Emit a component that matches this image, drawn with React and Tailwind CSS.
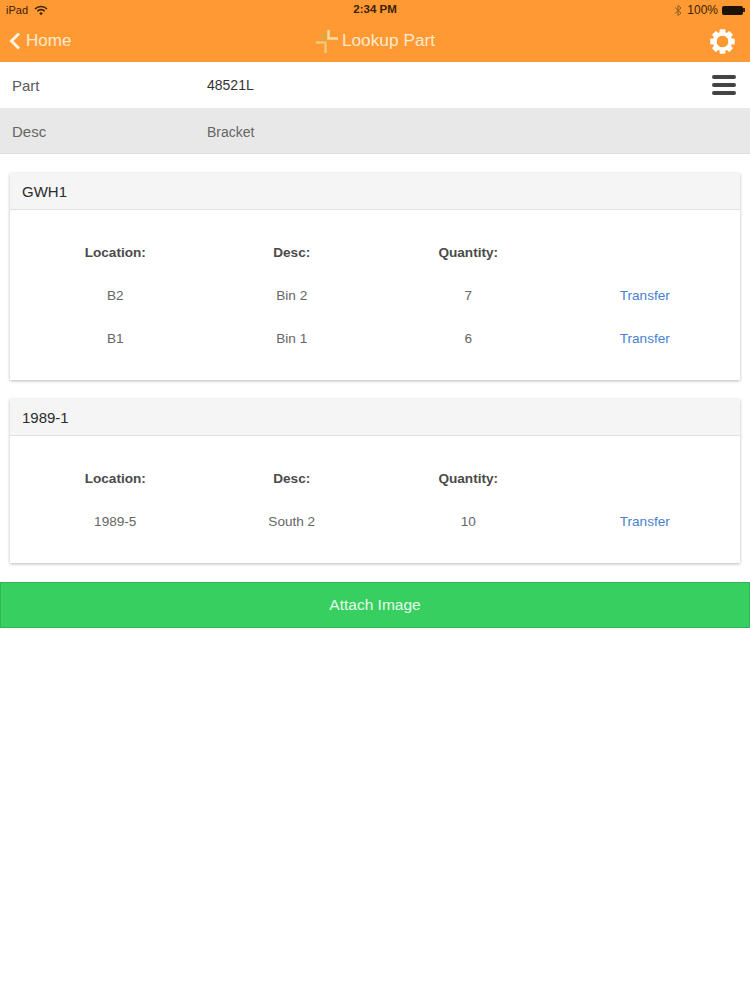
function Wifi() {
  return (
    <svg width="14" height="11" viewBox="0 0 14 11" className="ml-[6px]">
      <path d="M1 4 A8.5 8.5 0 0 1 13 4" fill="none" stroke="#3a2208" strokeWidth="1.6" />
      <path d="M3.3 6.2 A5.2 5.2 0 0 1 10.7 6.2" fill="none" stroke="#3a2208" strokeWidth="1.6" />
      <path d="M5.2 8.2 A2.4 2.4 0 0 1 8.8 8.2 L7 10.2 Z" fill="#3a2208" />
    </svg>
  );
}

function Logo() {
  return (
    <svg width="24" height="24" viewBox="0 0 24 24" className="mr-[3px]">
      <path d="M6 6 L12 3 V10 H5 Z" fill="#d3ab47" opacity="0.75" />
      <path d="M13.5 1 V9.5 H23" fill="none" stroke="#f8dca0" strokeWidth="2.4" />
      <path d="M1 13.5 H10.5 V24" fill="none" stroke="#ecc877" strokeWidth="2.4" />
    </svg>
  );
}

function Gear() {
  const teeth = [0, 45, 90, 135, 180, 225, 270, 315];
  return (
    <svg width="25" height="25" viewBox="0 0 24 24">
      {teeth.map((a) => (
        <rect key={a} x="9.2" y="0.2" width="5.6" height="6" rx="1" fill="#fff" transform={`rotate(${a} 12 12)`} />
      ))}
      <circle cx="12" cy="12" r="7.5" fill="none" stroke="#fff" strokeWidth="3.6" />
    </svg>
  );
}

function Card({ title, rows }) {
  return (
    <section className="mx-[10px] bg-white shadow-[0_1px_3px_rgba(0,0,0,0.28)]">
      <h2 className="h-[37px] pl-[12px] pt-[2px] flex items-center bg-[#f5f5f5] border-b border-[#e2e2e2] text-[15px] font-medium text-[#2b2b2b]">
        {title}
      </h2>
      <div className="pl-[17px] pr-[7px] pt-[22px] pb-[19px]">
        <div className="grid grid-cols-4 h-[43px] items-center text-center text-[13.6px] font-bold text-[#4a4a4a]">
          <div>Location:</div>
          <div>Desc:</div>
          <div>Quantity:</div>
          <div />
        </div>
        {rows.map((r) => (
          <div key={r[0]} className="grid grid-cols-4 h-[43px] items-center text-center text-[13.6px] text-[#666666]">
            <div>{r[0]}</div>
            <div>{r[1]}</div>
            <div>{r[2]}</div>
            <div className="text-[#4a7fd0]">Transfer</div>
          </div>
        ))}
      </div>
    </section>
  );
}

export default function App() {
  return (
    <div className="w-[750px] h-[1000px] bg-white font-['Liberation_Sans',Arial,sans-serif] overflow-hidden">
      <header className="h-[62px] bg-[#ff9933] flex flex-col">
        <div className="relative h-[20px] shrink-0 pl-[6px] pr-[5px] flex items-center justify-between text-[11px] text-[#3a2208]">
          <div className="flex items-center">
            iPad
            <Wifi />
          </div>
          <div className="absolute left-0 right-0 text-center font-bold text-[11.5px] pointer-events-none">2:34 PM</div>
          <div className="flex items-center gap-[4px]">
            <svg width="8" height="13" viewBox="0 0 8 12" className="mr-[1px]">
              <path d="M1 3 L7 8.5 L4 11 V1 L7 3.5 L1 9" fill="none" stroke="#8a5a22" strokeWidth="1" />
            </svg>
            <span className="text-[12px]">100%</span>
            <span className="flex items-center">
              <span className="block w-[21px] h-[9px] bg-[#1d1206] rounded-[2px]" />
              <span className="block w-[2px] h-[4px] bg-[#3a2208]" />
            </span>
          </div>
        </div>
        <div className="relative flex-1 flex items-center justify-between pl-[9px] pr-[15px]">
          <div className="flex items-center text-[#ffe9cc] text-[17px]">
            <svg width="12" height="18" viewBox="0 0 12 18" className="mr-[5px]">
              <path d="M10 1.5 L2.5 9 L10 16.5" fill="none" stroke="#fff3e0" strokeWidth="3" />
            </svg>
            Home
          </div>
          <div className="absolute left-0 right-0 flex items-center justify-center text-[17.3px] text-[#ffe9cc] pointer-events-none">
            <Logo />
            Lookup Part
          </div>
          <Gear />
        </div>
      </header>

      <div className="h-[46px] flex items-center bg-white relative">
        <div className="w-[207px] pl-[12px] pt-[2px] text-[15px] text-[#5a5a5a]">Part</div>
        <div className="text-[14px] text-[#333333] pt-[1px]">48521L</div>
        <div className="absolute right-[14px] top-[13px] w-[24px] flex flex-col gap-[4px]">
          <span className="block h-[4px] rounded-full bg-[#444444]" />
          <span className="block h-[4px] rounded-full bg-[#444444]" />
          <span className="block h-[4px] rounded-full bg-[#444444]" />
        </div>
      </div>
      <div className="h-[46px] flex items-center bg-[#e8e8e8] border-b border-[#dcdcdc] text-[#666666]">
        <div className="w-[207px] pl-[12px] pt-[4px] text-[15px]">Desc</div>
        <div className="text-[14px] pt-[4px]">Bracket</div>
      </div>

      <div className="pt-[19px] flex flex-col gap-[19px]">
        <Card title="GWH1" rows={[["B2", "Bin 2", "7"], ["B1", "Bin 1", "6"]]} />
        <Card title="1989-1" rows={[["1989-5", "South 2", "10"]]} />
      </div>

      <button className="mt-[19px] block w-full h-[46px] bg-[#37d060] border border-[#2fb554] text-[15.5px] text-[#e6f9ea]">
        Attach Image
      </button>
    </div>
  );
}
